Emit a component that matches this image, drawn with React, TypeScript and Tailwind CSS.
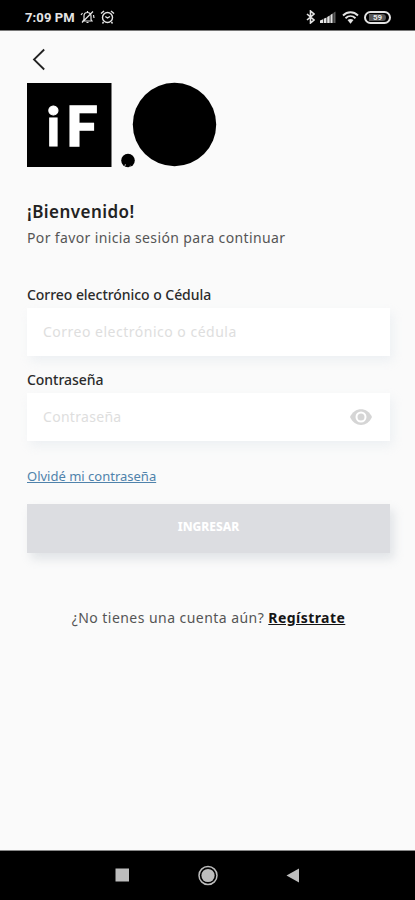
import { useState } from "react";
import type { ReactNode } from "react";

function StatusBar() {
  return (
    <header className="h-[31px] shrink-0 bg-black border-b border-[#777] pl-[25px] pr-[24px] pt-[4px] flex items-center justify-between text-[#e4e4e4]">
      <div className="flex items-center">
        <span className="w-[55px] whitespace-nowrap font-['Roboto',sans-serif] text-[13px] leading-none font-bold tracking-[0.1px]">7:09 PM</span>
        {/* Muted bell */}
        <svg className="w-[15px] h-[14px]" viewBox="0 0 15 14" fill="none" stroke="currentColor" strokeWidth="1.2">
          <path d="M4 9.5V6a3.5 3.5 0 0 1 7 0v3.5l1 1.5H3l1-1.500M6.500 12.500h2M7.500 1v1.500M2 12.500 13 1.500M1 5l1.500-2M14 8l-.5-3" />
        </svg>
        {/* Alarm clock */}
        <svg className="ml-[5px] w-[15px] h-[14px]" viewBox="0 0 15 14" fill="none" stroke="currentColor" strokeWidth="1.4">
          <circle cx="7.500" cy="7.500" r="5" />
          <path d="M1 3.500 4 1M14 3.500 11 1M5.300 6.500l2.200 1.500 2.500-1.500M3.500 12l-1 1.500M11.500 12l1 1.500" />
        </svg>
      </div>
      <div className="flex items-center">
        <svg className="w-[9px] h-[14px]" viewBox="0 0 9 14" fill="none" stroke="currentColor" strokeWidth="1.6">
          <path d="m1 4 7 6-3.500 3V1L8 4l-7 6" />
        </svg>
        <svg className="ml-[5px] w-[16px] h-[12px]" viewBox="0 0 16 12" fill="currentColor">
          <path d="M0 12V9.500l3-1.300V12zM3.700 12V7.800l2.800-1.300V12zM7.200 12V6l2.500-1.500V12zM10.400 12V4l2.200-1.500V12z" />
          <path d="M13.300 12V2L15.500.5V12z" opacity=".4" />
        </svg>
        <svg className="ml-[6px] w-[17px] h-[13px]" viewBox="0 0 17 13" fill="none" stroke="currentColor" strokeWidth="1.900">
          <path d="M1 4.500C5.500.2 11.500.2 16 4.500M3.500 7.200c3-2.800 7-2.800 10 0" />
          <path d="M5.500 9c2-1.500 4-1.500 6 0l-3 3.800z" fill="currentColor" stroke="none" />
        </svg>
        <span className="ml-[5px] w-[27px] h-[13px] rounded-full border-2 border-current flex items-center justify-center">
          <span className="h-[7px] w-[17px] rounded-r-full bg-[#555] text-center font-['Roboto',sans-serif] text-[8px] leading-[8px] font-bold">59</span>
        </span>
      </div>
    </header>
  );
}

function Logo() {
  return (
    <svg className="block w-[190px] h-[86px]" viewBox="0 0 190 86">
      <rect x="0" y="1" width="84.500" height="84" fill="#000" />
      <g fill="#fff" stroke="#fff" className="font-['Lato',sans-serif] font-black">
        <text x="19.500" y="64" fontSize="53">i</text>
        <text x="39" y="63.500" fontSize="56" strokeWidth="1.500">F</text>
      </g>
      <circle cx="101" cy="78.500" r="6.800" fill="#000" />
      <path d="m97 83.500 1.500-1.500.5 1.500zM102 84.500l1.500-1 .5 1z" fill="#ddd" />
      <circle cx="147.500" cy="42.500" r="41.700" fill="#000" />
    </svg>
  );
}

interface FieldProps {
  label: string;
  placeholder: string;
  type: string;
  inputClass: string;
  children?: ReactNode;
}

function Field({ label, placeholder, type, inputClass, children }: FieldProps) {
  return (
    <label className="block h-[85px]">
      <span className="block h-[23px] text-[14px] leading-[20px] font-medium tracking-[-0.05px] text-[#2b2b2b]">{label}</span>
      <span className="h-[48px] bg-white shadow-[3px_5px_10px_rgba(190,205,220,0.2)] flex items-center">
        <input
          type={type}
          placeholder={placeholder}
          className={`h-full min-w-0 flex-1 bg-transparent pl-[16px] pb-[2px] text-[14px] outline-none placeholder:text-[#dedede] ${inputClass}`}
        />
        {children}
      </span>
    </label>
  );
}

export default function App() {
  const [visible, setVisible] = useState(false);

  return (
    <div className="w-[415px] h-[900px] overflow-hidden bg-[#fafafa] flex flex-col font-['Noto_Sans',sans-serif]">
      <StatusBar />

      <main className="flex-1 pl-[27px] pr-[25px] flex flex-col">
        <button aria-label="Atrás" className="mt-[17px] ml-[5px] w-[14px] h-[23px]">
          <svg viewBox="0 0 14 23" className="w-[14px] h-[23px]" fill="none" stroke="#222" strokeWidth="1.800">
            <path d="M12.200 1.500 2 11.500l10.200 10" />
          </svg>
        </button>
        <div className="mt-[11px]">
          <Logo />
        </div>

        <h1 className="mt-[32px] h-[24px] text-[17px] leading-[24px] font-semibold tracking-[0.45px] text-[#222]">¡Bienvenido!</h1>
        <p className="mt-[2px] h-[24px] whitespace-nowrap text-[14px] leading-[24px] tracking-[0.37px] text-[#555]">Por favor inicia sesión para continuar</p>

        <form className="mt-[35px]" onSubmit={e => e.preventDefault()}>
          <Field
            label="Correo electrónico o Cédula"
            placeholder="Correo electrónico o cédula"
            type="text"
            inputClass="tracking-[0.5px]"
          />
          <Field label="Contraseña" placeholder="Contraseña" type={visible ? "text" : "password"} inputClass="tracking-[0.3px]">
            <button type="button" aria-label="Mostrar" className="mr-[18px]" onClick={() => setVisible(!visible)}>
              <svg className="w-[22px] h-[16px]" viewBox="0 0 22 16">
                <path d="M0 8C4.500-2.500 17.500-2.500 22 8 17.500 18.500 4.500 18.500 0 8z" fill="#d5d5d5" />
                <circle cx="11" cy="8" r="4.500" fill="#d5d5d5" stroke="#fff" strokeWidth="2" />
              </svg>
            </button>
          </Field>

          <a href="#" className="mt-[11px] block w-fit whitespace-nowrap text-[13px] leading-[20px] text-[#4f82ab] underline">Olvidé mi contraseña</a>
          <button
            type="submit"
            className="mt-[18px] h-[49px] w-full bg-[#dcdde1] shadow-[4px_6px_9px_rgba(170,180,190,0.3)] pb-[4px] text-[12px] font-extrabold text-white"
          >
            INGRESAR
          </button>
        </form>

        <p className="mt-[53px] whitespace-nowrap text-center text-[14px] leading-[24px] tracking-[0.45px] text-[#555]">
          ¿No tienes una cuenta aún? <a href="#" className="font-bold text-[#151515] underline">Regístrate</a>
        </p>
      </main>

      <nav className="h-[50px] shrink-0 border-t border-[#888] bg-black flex items-center justify-center">
        <svg className="w-[190px] h-[22px]" viewBox="0 0 190 22" fill="#bdbdbd">
          <rect x="2.500" y="3.500" width="13.500" height="13" />
          <circle cx="95" cy="10.500" r="9" fill="none" stroke="#bdbdbd" strokeWidth="1.500" />
          <circle cx="95" cy="10.500" r="6.600" />
          <path d="m173.500 10.500 12.500-7v14z" />
        </svg>
      </nav>
    </div>
  );
}
